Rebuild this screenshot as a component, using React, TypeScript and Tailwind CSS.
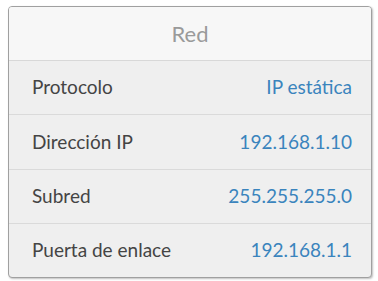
export default function App() {
  const rows: [string, string][] = [
    ["Protocolo", "IP estática"],
    ["Dirección IP", "192.168.1.10"],
    ["Subred", "255.255.255.0"],
    ["Puerta de enlace", "192.168.1.1"],
  ];
  return (
    <div className="w-[378px] h-[281px] bg-white pt-[6px] pl-[8px]" style={{ fontFamily: "Lato, 'Noto Sans', sans-serif" }}>
      <div className="w-[364px] h-[272px] rounded-[4px] border border-[#a0a0a0] bg-[#efefef] overflow-hidden shadow-[1px_1px_2px_rgba(0,0,0,0.25)] flex flex-col">
        <div className="h-[54px] bg-[#f7f7f7] border-b border-[#d8d8d8] flex items-center justify-center text-[22px] text-[#9a9a9a]">
          Red
        </div>
        {rows.map(([k, v], i) => (
          <div
            key={k}
            className={`flex-1 flex items-center justify-between pl-[23px] pr-[19px] text-[19px] ${i < rows.length - 1 ? "border-b border-[#dadada]" : ""}`}
          >
            <span className="text-[#444444]">{k}</span>
            <span className="text-[#3a84bd]">{v}</span>
          </div>
        ))}
      </div>
    </div>
  );
}
